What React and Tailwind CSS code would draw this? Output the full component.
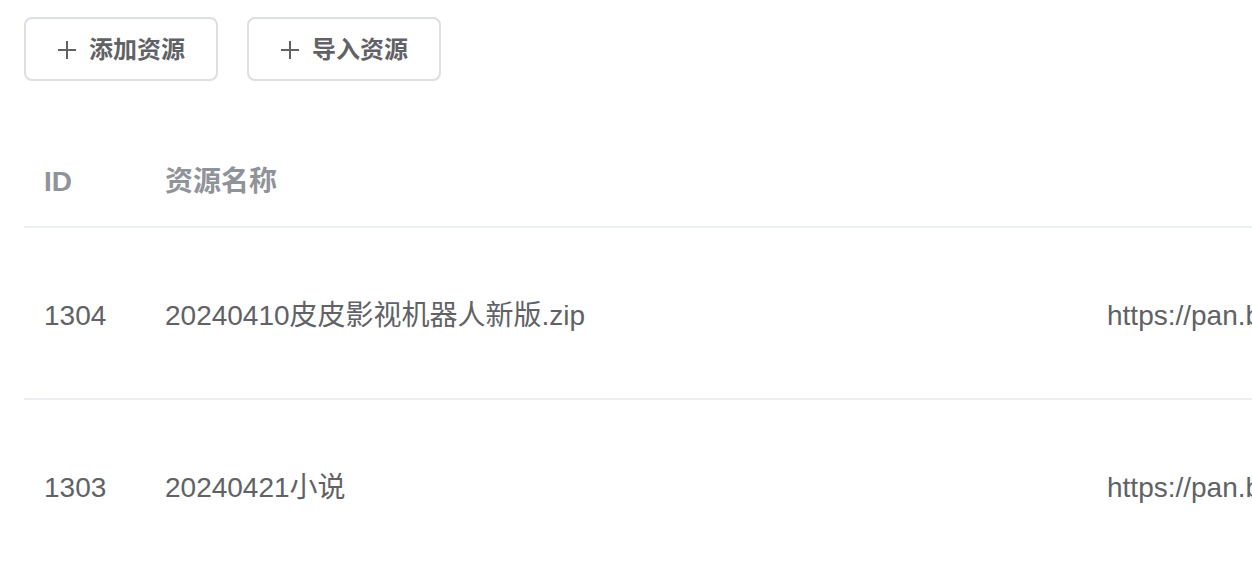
import React from "react";

const font = { fontFamily: '"Liberation Sans", "Noto Sans CJK SC", sans-serif' };

function Plus() {
  return (
    <svg width="20" height="20" viewBox="0 0 20 20" className="shrink-0">
      <path d="M10 1v18M1 10h18" stroke="#606266" strokeWidth="2" fill="none" />
    </svg>
  );
}

function Btn({ children }) {
  return (
    <button className="flex items-center justify-center gap-[12px] w-[194px] h-[64px] pt-[2px] border-2 border-[#dcdfe6] rounded-[8px] bg-white text-[#606266] text-[24px] font-bold leading-none">
      <Plus />
      <span>{children}</span>
    </button>
  );
}

const rows = [
  { id: "1304", name: "20240410皮皮影视机器人新版.zip", url: "https://pan.baidu.com/s/1xYz" },
  { id: "1303", name: "20240421小说", url: "https://pan.baidu.com/s/1aBc" },
];

export default function App() {
  return (
    <div className="w-[1252px] h-[568px] overflow-hidden bg-white" style={font}>
      <div className="flex gap-[29px] pl-[24px] pt-[17px]">
        <Btn>添加资源</Btn>
        <Btn>导入资源</Btn>
      </div>
      <div className="ml-[24px] mt-[53px] w-[1800px]">
        <div className="flex items-center h-[94px] pt-[4px] border-b-2 border-[#ebeef5] text-[#909399] text-[28px] font-bold leading-none">
          <div className="w-[120px] shrink-0 pl-[20px]">ID</div>
          <div className="w-[942px] shrink-0 pl-[21px]">资源名称</div>
          <div className="shrink-0 pl-[21px]"></div>
        </div>
        {rows.map((r) => (
          <div key={r.id} className="flex items-center h-[172px] pt-[5px] border-b-2 border-[#ebeef5] text-[#606266] text-[28px] leading-none">
            <div className="w-[120px] shrink-0 pl-[20px]">{r.id}</div>
            <div className="w-[942px] shrink-0 pl-[21px] whitespace-nowrap">{r.name}</div>
            <div className="shrink-0 pl-[21px] whitespace-nowrap">{r.url}</div>
          </div>
        ))}
      </div>
    </div>
  );
}
